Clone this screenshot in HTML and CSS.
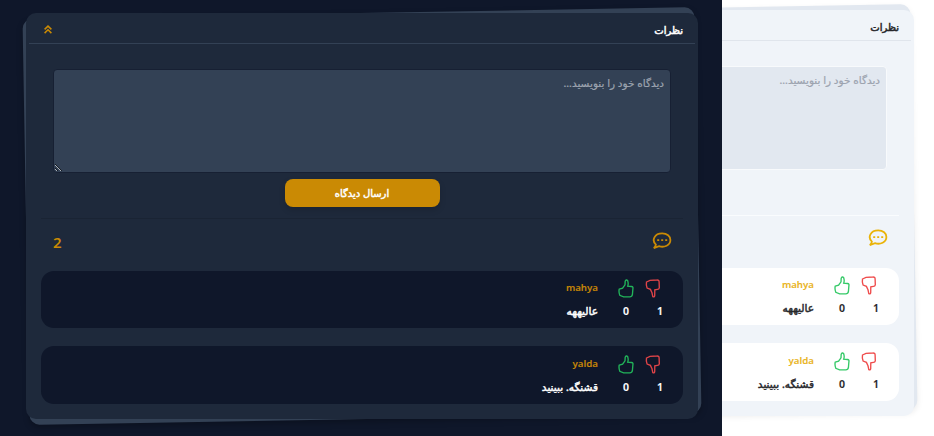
FILE: index.html
```html
<!DOCTYPE html>
<html lang="fa" dir="rtl">
<head>
<meta charset="utf-8">
<title>نظرات</title>
<link rel="stylesheet" href="styles.css">
</head>
<body>
<svg class="sprite" aria-hidden="true">
  <symbol id="up" viewBox="0 0 16 19"><path d="M1.2 10.2 4.6 9.2 7 5.8 7.2 2.2Q8.2.2 9.6 1.4 10.7 4.4 9.7 7.2L13.6 7.5Q15.3 7.8 14.9 9.7L14.4 15.7Q14 17.9 11.8 17.9L5.6 17.8 1.8 16.3Q.6 13.2 1.2 10.2Z"/></symbol>
  <symbol id="down" viewBox="0 0 16 19"><path d="M1.5 3 5 1.3 11.8 1Q14 .8 14.1 2.8L14.3 8.8Q14 10.2 12.5 10.4L9.8 10.8 9.7 16.7Q9.2 18.4 7.8 17.6L7 13.8 5.4 10.4 2.1 9.1Q.9 6 1.5 3Z"/></symbol>
  <symbol id="chat" viewBox="0 0 20 18"><path d="M3.9 12.6C-.8 8.1 2.6 1.4 10.2 1.4c4.8 0 8.2 2.8 8.2 6.6 0 5.4-6.2 7.9-11.4 6.2L1.8 16.2c1.3-1.2 1.9-2.3 2.1-3.6Z"/><path class="dots" d="M5.2 7.2h2v1.8h-2zM9.2 7.2h2v1.8h-2zM13.2 7.2h2v1.8h-2z"/></symbol>
</svg>
<main class="page">
  <section class="panel dark">
    <div class="card">
      <header class="head"><h2>نظرات</h2><svg class="collapse" viewBox="0 0 8 9"><path d="M.6 4.4 4 1.1 7.4 4.4M.6 8.1 4 4.8 7.4 8.1"/></svg></header>
      <div class="body">
        <form class="form"><textarea placeholder="دیدگاه خود را بنویسید..."></textarea><button type="button">ارسال دیدگاه</button></form>
        <div class="summary"><svg class="chat"><use href="#chat"/></svg><span>2</span></div>
        <article class="comment">
          <div class="votes"><svg class="down"><use href="#down"/></svg><svg class="up"><use href="#up"/></svg><b>1</b><b>0</b></div>
          <div class="text"><span class="name">mahya</span><p>عالیههه</p></div>
        </article>
        <article class="comment">
          <div class="votes"><svg class="down"><use href="#down"/></svg><svg class="up"><use href="#up"/></svg><b>1</b><b>0</b></div>
          <div class="text"><span class="name">yalda</span><p>قشنگه. ببینید</p></div>
        </article>
      </div>
    </div>
  </section>
  <section class="panel light">
    <div class="card">
      <header class="head"><h2>نظرات</h2></header>
      <div class="body">
        <form class="form"><textarea placeholder="دیدگاه خود را بنویسید..."></textarea><button type="button">ارسال دیدگاه</button></form>
        <div class="summary"><svg class="chat"><use href="#chat"/></svg></div>
        <article class="comment">
          <div class="votes"><svg class="down"><use href="#down"/></svg><svg class="up"><use href="#up"/></svg><b>1</b><b>0</b></div>
          <div class="text"><span class="name">mahya</span><p>عالیههه</p></div>
        </article>
        <article class="comment">
          <div class="votes"><svg class="down"><use href="#down"/></svg><svg class="up"><use href="#up"/></svg><b>1</b><b>0</b></div>
          <div class="text"><span class="name">yalda</span><p>قشنگه. ببینید</p></div>
        </article>
      </div>
    </div>
  </section>
</main>
</body>
</html>
```
FILE: styles.css
```css
* { box-sizing: border-box; margin: 0; }
body { font-family: "Noto Sans", "DejaVu Sans", sans-serif; font-size: 10px; overflow: hidden; }
.sprite { position: absolute; width: 0; height: 0; }
svg { fill: none; stroke: currentColor; display: block; }
.page { display: flex; direction: ltr; width: 934px; height: 436px; background: #fff; }
.panel { direction: rtl; overflow: hidden; height: 436px; display: flex; flex: none; }
.dark {
  --bg: #0f172a; --card: #1e293b; --back: #334155; --line: #334155; --field: #334155;
  --edge: #172033; --hr: #1a2434; --item: #0f172a; --fg: #fff; --gold: #ca8a04; --name: #c48508; --hint: #9ca3af;
  --green: #22b45a; --red: #e04448; --shadow: rgba(0,0,0,.25);
  width: 722px; padding: 13px 24px 0 0; background: var(--bg);
}
.light {
  --bg: #fff; --card: #f0f4f9; --back: #e2e8f0; --line: #e0e5ec; --field: #e2e8f0;
  --edge: #f8fafc; --hr: #fafcfe; --item: #fff; --fg: #27272a; --gold: #eab308; --name: #eab526; --hint: #9ca3af;
  --green: #34c967; --red: #ef4b4b; --shadow: rgba(0,0,0,.08);
  width: 212px; padding: 10px 20px 0 0; background: var(--bg);
}
.card { position: relative; z-index: 0; flex: none; width: 672px; height: 406px; }
.card::before, .card::after { content: ""; position: absolute; inset: 0; border-radius: 10px; }
.card::before { z-index: -2; background: var(--back); transform: rotate(-1deg); box-shadow: 0 3px 6px var(--shadow); }
.card::after { z-index: -1; background: var(--card); }
.head { display: flex; justify-content: space-between; align-items: center; height: 31px; margin: 0 3px; padding: 3px 12px 0 15px; border-bottom: 1px solid var(--line); color: var(--fg); }
.head h2 { font-size: 10px; line-height: 16px; font-weight: 400; -webkit-text-stroke: .5px; }
.collapse { width: 8px; height: 9px; color: var(--gold); stroke-width: 1.5; }
.body { padding: 25px 15px 0; }
.form { display: flex; flex-direction: column; align-items: center; height: 149.5px; padding: 0 12px; border-bottom: 1px solid var(--hr); }
textarea { width: 618px; height: 104px; flex: none; padding: 5px 6px; border: 1px solid var(--edge); border-radius: 4px; background: var(--field); font: 10.5px/17px "Noto Sans", "DejaVu Sans", sans-serif; resize: both; outline: 0; }
textarea::placeholder { color: var(--hint); opacity: 1; -webkit-text-stroke: .2px; }
button { width: 155px; height: 28px; margin-top: 6px; padding: 0 0 1px; border: 0; border-radius: 8px; background: var(--gold); color: #fff; font: 400 10px "Noto Sans", "DejaVu Sans", sans-serif; -webkit-text-stroke: .45px; box-shadow: 0 3px 6px rgba(0,0,0,.15); }
.light button { visibility: hidden; }
.summary { display: flex; justify-content: space-between; align-items: center; height: 52px; padding: 0 11px 8px 12px; color: var(--gold); font-size: 15px; font-weight: 600; }
.summary span { padding-top: 3px; }
.chat { width: 20px; height: 18px; stroke-width: 1.8; }
.dots { fill: currentColor; stroke: none; }
.comment { display: flex; height: 57.5px; margin-bottom: 18px; padding: 8.5px 15px 0; border-radius: 13px; background: var(--item); color: var(--fg); }
.votes { display: grid; grid-template-columns: 34px 36px; grid-template-rows: 19px 26px; width: 70px; }
.votes svg { width: 16px; height: 19px; stroke-width: 1.35; }
.votes .down { color: var(--red); margin-right: 7px; }
.votes .up { color: var(--green); }
.votes b { width: 16px; text-align: center; font-size: 10.5px; line-height: 26px; font-weight: 600; -webkit-text-stroke: .15px; }
.text { font-size: 10.6px; }
.name { display: block; height: 17px; line-height: 17px; color: var(--name); font-size: 9.7px; font-weight: 600; -webkit-text-stroke: .1px; }
.text p { margin-top: 7px; line-height: 17px; white-space: nowrap; -webkit-text-stroke: .45px; }
```
